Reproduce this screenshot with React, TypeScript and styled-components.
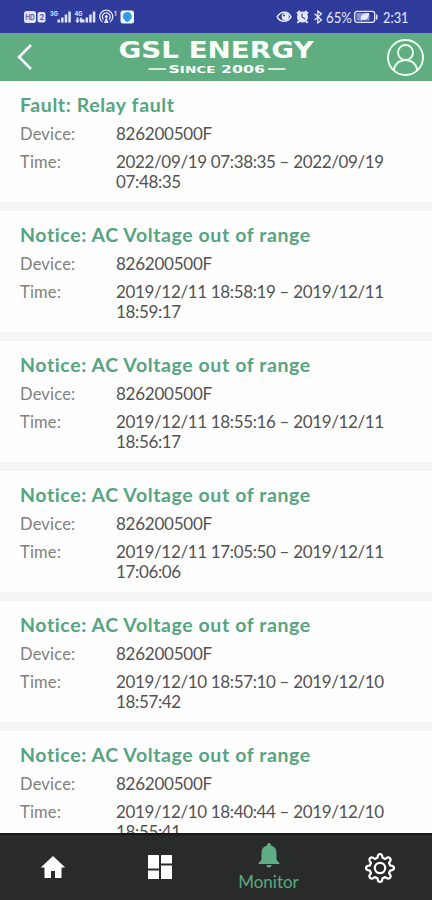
import React from "react";
import styled, { createGlobalStyle } from "styled-components";

const Global = createGlobalStyle`
  * { box-sizing: border-box; }
  body { margin: 0; background: #fff; font-family: Lato, "Noto Sans", sans-serif; }
`;

const Screen = styled.div`
  width: 432px;
  height: 900px;
  display: flex;
  flex-direction: column;
  overflow: hidden;
  background: #fefefe;
`;

const StatusBar = styled.div`
  height: 33px;
  flex: none;
  display: flex;
  justify-content: space-between;
  padding: 0 23px;
  background: #303c9c;
`;

const Header = styled.header`
  height: 48px;
  flex: none;
  display: grid;
  grid-template-columns: 102px 1fr 39px;
  align-items: center;
  padding: 0 7px 0 16px;
  background: #61ad82;
`;

const HeaderButton = styled.button`
  height: 40px;
  padding: 0;
  border: 0;
  background: none;
  display: flex;
  align-items: center;
`;

const List = styled.main`
  flex: 1;
  min-height: 0;
  overflow: hidden;
  display: flex;
  flex-direction: column;
  gap: 9px;
  background: #f5f5f5;
`;

const Card = styled.article`
  height: 121px;
  flex: none;
  padding: 12px 20px 0;
  background: #fefefe;
`;

const Title = styled.h2`
  margin: 0 0 7px;
  font-size: 19.5px;
  line-height: 24px;
  font-weight: 700;
  letter-spacing: 0.6px;
  color: #55a582;
  white-space: nowrap;
`;

const Row = styled.div`
  display: grid;
  grid-template-columns: 96px 280px;
  margin-bottom: 8px;
  font-size: 17px;
  line-height: 20px;
`;

const Label = styled.span`
  font-size: 16.5px;
  letter-spacing: 0.2px;
  color: #808080;
`;

const Value = styled.span<{ $spacing: number }>`
  letter-spacing: ${(p) => p.$spacing}px;
  color: #525252;
`;

const TabBar = styled.nav`
  height: 67px;
  flex: none;
  display: grid;
  grid-template-columns: 106px 107px 111px 1fr;
  border-top: 2px solid #151918;
  background: #292b2b;
`;

const Tab = styled.button<{ $shift?: number }>`
  padding: 0 0 0 ${(p) => p.$shift ?? 0}px;
  border: 0;
  background: none;
  display: flex;
  flex-direction: column;
  align-items: center;
  justify-content: center;
  color: #fff;
  font-family: inherit;
`;

const TabLabel = styled.span`
  margin-top: 4px;
  font-size: 17px;
  line-height: 20px;
  color: #5aa982;
`;

type Fault = { title: string; time: string };

const notice = "Notice: AC Voltage out of range";
const faults: Fault[] = [
  { title: "Fault: Relay fault", time: "2022/09/19 07:38:35 – 2022/09/19 07:48:35" },
  { title: notice, time: "2019/12/11 18:58:19 – 2019/12/11 18:59:17" },
  { title: notice, time: "2019/12/11 18:55:16 – 2019/12/11 18:56:17" },
  { title: notice, time: "2019/12/11 17:05:50 – 2019/12/11 17:06:06" },
  { title: notice, time: "2019/12/10 18:57:10 – 2019/12/10 18:57:42" },
  { title: notice, time: "2019/12/10 18:40:44 – 2019/12/10 18:55:41" },
];

const bars = [3, 5, 8, 11];

const SignalIcons = () => (
  <svg width="114" height="33" viewBox="23 0 114 33" fill="#dfe3fa" fontFamily="Inter, sans-serif">
    <rect x="24" y="11" width="12" height="12" rx="2.5" />
    <text x="25.3" y="20" fontSize="7" fontWeight="700" fill="#5963b4" textLength="9.5" lengthAdjust="spacingAndGlyphs">HD</text>
    <rect x="37.5" y="12" width="8" height="10.5" rx="2" />
    <text x="39.4" y="20" fontSize="7.5" fontWeight="700" fill="#5963b4">2</text>
    <text x="50" y="16" fontSize="6.5" fontWeight="700" textLength="8" lengthAdjust="spacingAndGlyphs">3G</text>
    {bars.map((h, i) => <rect key={h} x={57.5 + i * 3.6} y={22.5 - h} width="2.5" height={h} />)}
    <text x="74.5" y="16" fontSize="6.5" fontWeight="700" textLength="8" lengthAdjust="spacingAndGlyphs">4G</text>
    <path d="M76.5 17.5h2v3H80L77.5 23 75 20.500h1.500zM80 22.500v-3h-1l2-2.300 2 2.300h-1v3z" />
    {bars.map((h, i) => <rect key={h} x={82 + i * 3.6} y={22.5 - h} width="2.5" height={h} />)}
    <g fill="none" stroke="#dfe3fa" strokeWidth="1.3">
      <path d="M102.500 22a6.500 6.500 0 1 1 7.500 0" />
      <path d="M103.500 19.500a3.900 3.900 0 1 1 5.500 0" />
    </g>
    <circle cx="106.300" cy="16.500" r="1.500" />
    <path d="m106.300 17-2.300 6h4.600z" />
    <text x="114" y="15.500" fontSize="6" fontWeight="700">1</text>
    <rect x="120.500" y="10.500" width="13.500" height="13" rx="2.500" fill="#f0f8ff" />
    <path d="M127.300 22.300c-2-1.600-4.500-3.200-4.500-5.900a4.500 4.500 0 0 1 9 0c0 2.700-2.500 4.300-4.500 5.900" fill="#319be9" />
  </svg>
);

const SystemIcons = () => (
  <svg width="137" height="33" viewBox="272 0 137 33" fill="#e5e9fc" fontFamily="Lato, sans-serif">
    <path d="M277 17q3-4.800 7.500-4.800T291 17q-3 4.300-7 4.300T277 17" fill="none" stroke="#e5e9fc" strokeWidth="1.500" />
    <circle cx="285.300" cy="16.700" r="3.600" />
    <circle cx="284" cy="15.600" r="1" fill="#303c9c" />
    <circle cx="302.500" cy="17" r="5.500" />
    <path d="m297 13.500 3-2.500m8 2.500-3-2.500m-6 10-1.500 2m8.500-2 1.500 2" stroke="#e5e9fc" strokeWidth="2" />
    <path d="M302 13.500V17l3 2" fill="none" stroke="#4e58ae" strokeWidth="1.300" />
    <path d="m314.500 13.800 7 6.200-3.700 3V11l3.700 2.900-7 6.200" fill="none" stroke="#e5e9fc" strokeWidth="1.300" />
    <text x="326" y="22.500" fontSize="15.500" textLength="26" lengthAdjust="spacingAndGlyphs">65%</text>
    <rect x="354.700" y="11.300" width="20" height="11" rx="2.500" fill="none" stroke="#e5e9fc" strokeWidth="1.300" />
    <rect x="356.500" y="13" width="13" height="7.600" rx="1" fill="#8791d2" />
    <path d="M361 19.500c-1-4 2-6.500 8-6.500 0 5-3 8-6.500 6.500l-2 1.500" />
    <path d="M376.700 14.500v5" stroke="#e5e9fc" strokeWidth="1.500" />
    <text x="383" y="22.500" fontSize="16" textLength="25.500" lengthAdjust="spacingAndGlyphs">2:31</text>
  </svg>
);

const Logo = () => (
  <svg width="198" height="40" viewBox="118 37 198 40" fill="#f7fff8" stroke="#f7fff8" fontWeight="700">
    <text x="118.500" y="58" fontFamily="DejaVu Sans, sans-serif" fontSize="22.500" strokeWidth="0" textLength="195" lengthAdjust="spacingAndGlyphs">GSL ENERGY</text>
    <path d="M148.500 69H166M268 69h17.500" strokeWidth="1.700" />
    <text x="168.500" y="72.500" fontFamily="DejaVu Sans, sans-serif" strokeWidth="0" fontSize="11" textLength="96.500" lengthAdjust="spacingAndGlyphs">S<tspan fontSize="9.500">INCE</tspan> 2006</text>
  </svg>
);

const Gear = () => (
  <svg width="32" height="32" viewBox="-16 -16 32 32" fill="none" stroke="#fff" strokeWidth="2.200" strokeLinejoin="round">
    <path d="M-2.500-10.200Q-2.300-14 0-14T2.500-10.200L5.200-9Q8-11.800 9.900-9.900T9-5.200L10.200-2.500Q14-2.300 14 0T10.200 2.500L9 5.200Q11.800 8 9.900 9.900T5.200 9L2.500 10.200Q2.300 14 0 14T-2.500 10.200L-5.200 9Q-8 11.800-9.900 9.900T-9 5.200L-10.200 2.500Q-14 2.300-14 0T-10.200-2.500L-9-5.200Q-11.800-8-9.900-9.900T-5.200-9Z" />
    <circle r="5.200" />
  </svg>
);

export default function App() {
  return (
    <>
      <Global />
      <Screen>
        <StatusBar><SignalIcons /><SystemIcons /></StatusBar>
        <Header>
          <HeaderButton aria-label="Back">
            <svg width="18" height="28" viewBox="0 0 18 28" fill="none" stroke="#fff" strokeWidth="2.500"><path d="M15 2 3 14l12 12" /></svg>
          </HeaderButton>
          <Logo />
          <HeaderButton aria-label="Account">
            <svg width="39" height="39" viewBox="0 0 39 39" fill="none" stroke="#ecfff0" strokeWidth="1.900">
              <circle cx="19.500" cy="19.500" r="17.500" /><circle cx="19.500" cy="14.500" r="7.500" /><path d="M7.800 32.500c.8-6.500 5.500-10.500 11.700-10.500s10.900 4 11.700 10.500" />
            </svg>
          </HeaderButton>
        </Header>
        <List>
          {faults.map((fault) => (
            <Card key={fault.time}>
              <Title>{fault.title}</Title>
              <Row><Label>Device:</Label><Value $spacing={-0.25}>826200500F</Value></Row>
              <Row><Label>Time:</Label><Value $spacing={-0.35}>{fault.time}</Value></Row>
            </Card>
          ))}
        </List>
        <TabBar>
          <Tab aria-label="Home">
            <svg width="26" height="26" viewBox="0 0 26 26" fill="currentColor"><path d="M13 1 .8 12.500h3.700V23H11v-7h4v7h6.500V12.500h3.700z" /></svg>
          </Tab>
          <Tab aria-label="Dashboard">
            <svg width="24" height="26" viewBox="0 0 24 26" fill="currentColor"><path d="M0 0h11v13.500H0zM13 0h11v8.500H13zM0 15.500h11V24H0zM13 10.500h11V24H13z" /></svg>
          </Tab>
          <Tab>
            <svg width="22" height="25" viewBox="0 0 22 25" fill="#5fae85"><path d="M11 0a2 2 0 0 0-2 2v.5C5.500 3.400 3.500 6 3.500 10v7L.5 20v1h21v-1l-3-3v-7c0-4-2-6.600-5.500-7.500V2a2 2 0 0 0-2-2M8.500 22a2.500 2.500 0 0 0 5 0z" /></svg>
            <TabLabel>Monitor</TabLabel>
          </Tab>
          <Tab $shift={4} aria-label="Settings"><Gear /></Tab>
        </TabBar>
      </Screen>
    </>
  );
}
